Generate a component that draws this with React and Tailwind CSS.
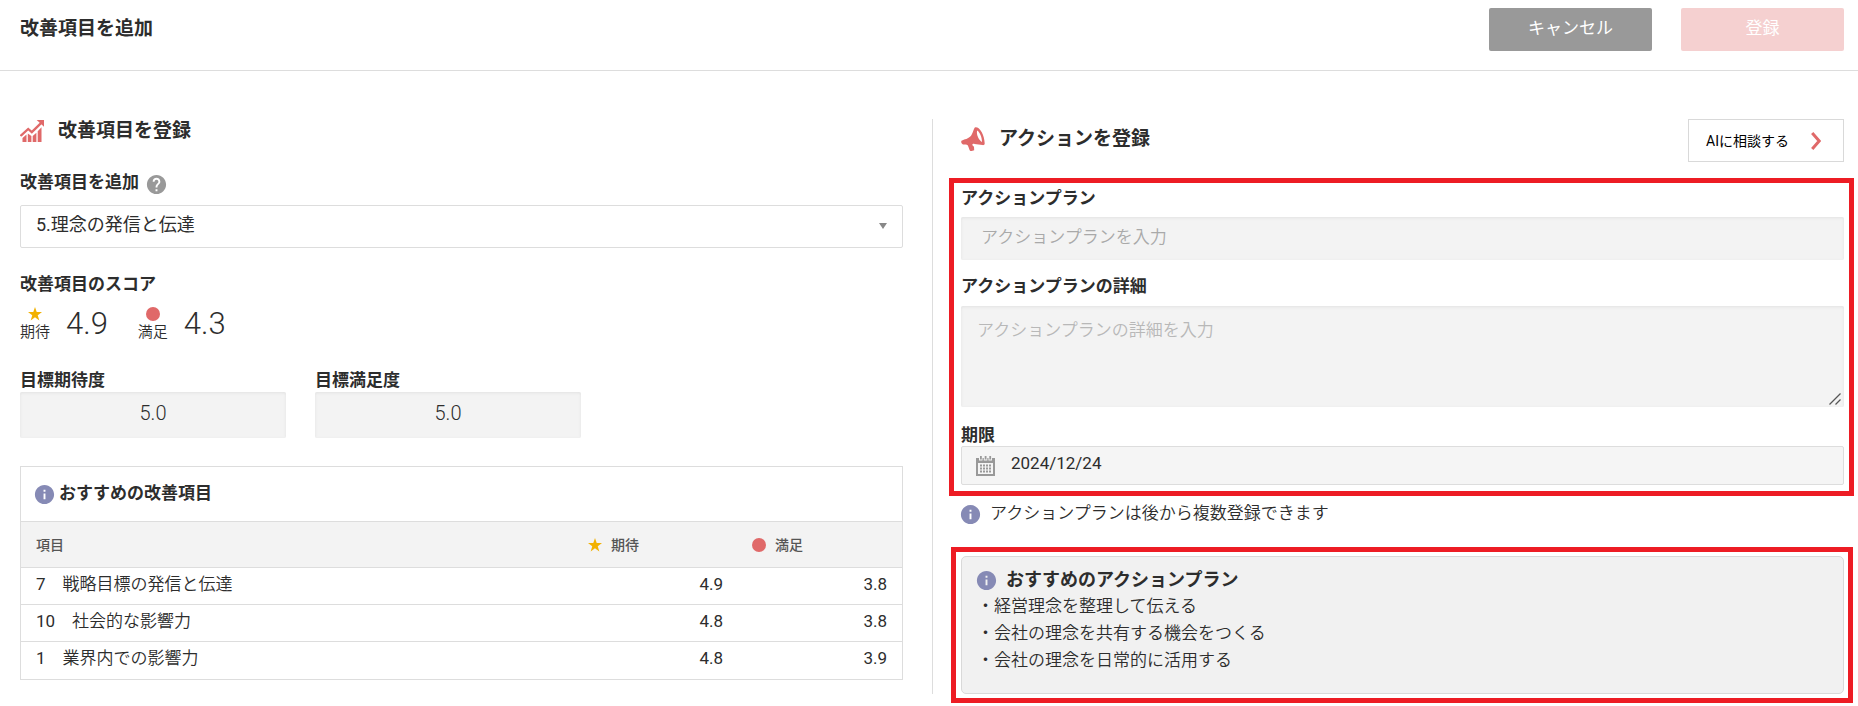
import React, { useState } from 'react';
import { MdHelp, MdInfo } from 'react-icons/md';

const recomendados = [
  { id: 7, nombre: '戦略目標の発信と伝達', expectativa: '4.9', satisfaccion: '3.8' },
  { id: 10, nombre: '社会的な影響力', expectativa: '4.8', satisfaccion: '3.8' },
  { id: 1, nombre: '業界内での影響力', expectativa: '4.8', satisfaccion: '3.9' },
];

const planes = [
  '経営理念を整理して伝える',
  '会社の理念を共有する機会をつくる',
  '会社の理念を日常的に活用する',
];

function Star() {
  return (
    <svg viewBox="0 0 24 24" className="size-[14px] shrink-0 fill-[#f2b100]" aria-hidden="true">
      <path d="M12 0l2.900 8.600H24l-7.300 5.500L19.400 23 12 17.700 4.600 23l2.700-8.900L0 8.600h9.100z" />
    </svg>
  );
}

function Dot() {
  return <span className="inline-block size-[14px] shrink-0 rounded-full bg-[#e06969]" />;
}

function InfoIcon() {
  return <MdInfo className="-m-0.5 size-[23px] shrink-0 text-[#868ab5]" aria-hidden="true" />;
}

function ChartIcon() {
  return (
    <svg viewBox="0 0 24 22" className="h-[22px] w-6 shrink-0" fill="#e06969" aria-hidden="true">
      <path d="M2.500 18l4-3.500V22h-4zM7.800 13.500l3.600 2.500v6H7.800zM12.700 16l3.700-3.200V22h-3.700zM17.700 11.300l3.800-4V22h-3.800z" />
      <path d="M1.200 15.300l7-6.300 3.600 3.100 8.700-8.500" fill="none" stroke="#e06969" strokeWidth="2.300" strokeLinecap="round" />
      <path d="M16.700 0H24v6.800z" />
    </svg>
  );
}

function MegaphoneIcon() {
  return (
    <svg viewBox="0 0 24 24" className="size-6 shrink-0" fill="#e06969" aria-hidden="true">
      <path
        fillRule="evenodd"
        d="M14.500 0.200C19 0 23.500 8 23.700 16.500c0 1.200-1 1.800-2.200 1.600l-8-1.200c-1.800-.3-2.500.5-1.900 1.700l1.400 1.200.2 3.500-3.300.9c-1.500-.2-1.800-3.300-3.200-6-1-.9-2.700-.3-4.200-.7C.6 17-.3 15.400.5 13.800c.5-1 6-1.600 8.500-4.100C12 7.200 12.500.400 14.500.200zM16.200 3.500c-1.200 3.500 1.500 9.500 4.800 11.500C21 10 19 5.500 16.200 3.500z"
      />
    </svg>
  );
}

function CalendarIcon() {
  return (
    <svg viewBox="0 0 19 20" className="h-5 w-[19px] shrink-0" aria-hidden="true">
      <path d="M0 2h19v18H0z" fill="#999" />
      <path d="M2 7h15v11H2z" fill="#f5f5f5" />
      <path d="M3 0h3.500v4.500H3zM7.800 0h3.500v4.500H7.800zM12.500 0H16v4.500h-3.500z" fill="#f5f5f5" />
      <path d="M4 0h1.800v3.500H4zM8.700 0h1.800v3.500H8.700zM13.300 0h1.800v3.500h-1.800z" fill="#999" />
      <path d="M4 9.500h11.500M4 12.500h11.500M4 15.500h11.500" stroke="#999" strokeWidth="2" strokeDasharray="2 1" />
    </svg>
  );
}

function ScoreItem({ icon, label, value }) {
  return (
    <div className="flex items-start gap-4">
      <div className="flex flex-col items-center text-[15px] leading-[22px] font-[350]">
        {icon}
        <span>{label}</span>
      </div>
      <span className="text-[31px] leading-[34px] font-light">{value}</span>
    </div>
  );
}

function TargetField({ id, label }) {
  return (
    <div className="w-[266px]">
      <label htmlFor={id} className="block text-[17px] leading-6 font-bold">{label}</label>
      <input
        id={id}
        defaultValue="5.0"
        className="block h-[46px] w-full rounded-[2px] bg-[#f3f3f3] pb-1 text-center text-xl font-light text-[#2d2d2d] inset-shadow-[0_1px_3px_#e2e2e2]"
      />
    </div>
  );
}

// Cabecera con título y botones
function Header() {
  return (
    <header className="flex h-[71px] items-start justify-between border-b border-[#ddd] pt-2 pr-3.5 pl-5">
      <h1 className="text-[19px] leading-[42px] font-bold">改善項目を追加</h1>
      <div className="flex gap-[29px] text-[17px] text-white">
        <button type="button" className="h-[43px] w-[163px] rounded-[2px] bg-[#999] pb-0.5">キャンセル</button>
        <button type="button" className="h-[43px] w-[163px] rounded-[2px] bg-[#f5d0d0] pb-0.5">登録</button>
      </div>
    </header>
  );
}

// Columna izquierda: elemento a mejorar
function ImprovementPanel() {
  return (
    <section className="flex-1 pr-[29px]">
      <div className="flex h-6 items-center gap-[14px]">
        <ChartIcon />
        <h2 className="text-[19px] leading-[26px] font-bold">改善項目を登録</h2>
      </div>

      <div className="mt-6 flex h-[30px] items-center gap-1.5">
        <label htmlFor="item" className="text-[17px] leading-6 font-bold">改善項目を追加</label>
        <MdHelp className="mt-1 size-[23px] text-[#999]" aria-hidden="true" />
      </div>
      <div className="relative mt-2">
        <select
          id="item"
          className="h-[43px] w-full appearance-none rounded-[2px] border border-[#ddd] bg-white pr-10 pb-1 pl-[15px] text-[18px]"
        >
          <option>5.理念の発信と伝達</option>
        </select>
        <svg viewBox="0 0 8 6" className="pointer-events-none absolute top-[18px] right-4 h-1.5 w-2 fill-[#888]" aria-hidden="true">
          <path d="M0 0h8L4 6z" />
        </svg>
      </div>

      <h3 className="mt-6 text-[17px] leading-6 font-bold">改善項目のスコア</h3>
      <div className="mt-[11px] flex h-[37px] gap-[30px]">
        <ScoreItem icon={<Star />} label="期待" value="4.9" />
        <ScoreItem icon={<Dot />} label="満足" value="4.3" />
      </div>

      <div className="mt-6 flex gap-[29px]">
        <TargetField id="target-expect" label="目標期待度" />
        <TargetField id="target-satisfy" label="目標満足度" />
      </div>

      <div className="mt-7 border border-[#ddd]">
        <div className="flex h-[54px] items-center gap-[5px] px-[14px]">
          <InfoIcon />
          <h3 className="pb-0.5 text-[17px] leading-6 font-bold">おすすめの改善項目</h3>
        </div>
        <table className="w-full table-fixed text-[17px]">
          <thead className="bg-[#f3f3f3] text-left text-sm text-[#555]">
            <tr className="h-[46px] border-t border-[#ddd]">
              <th className="px-[15px] font-medium">項目</th>
              <th className="w-[164px] px-3.5 font-medium">
                <span className="flex items-center gap-[9px]"><Star />期待</span>
              </th>
              <th className="w-[164px] px-3.5 font-medium">
                <span className="flex items-center gap-[9px]"><Dot />満足</span>
              </th>
            </tr>
          </thead>
          <tbody>
            {recomendados.map((item) => (
              <tr key={item.id} className="h-[37px] border-t border-[#ddd] leading-6">
                <td className="px-[15px] pb-1 font-[350]">
                  <span className="font-normal">{item.id}</span>{'\u3000'}{item.nombre}
                </td>
                <td className="px-[15px] pb-1 text-right">{item.expectativa}</td>
                <td className="px-[15px] pb-1 text-right">{item.satisfaccion}</td>
              </tr>
            ))}
          </tbody>
        </table>
      </div>
    </section>
  );
}

// Columna derecha: plan de acción
function ActionPanel() {
  const [fecha, setFecha] = useState('2024/12/24');

  return (
    <section className="flex-1 border-l border-[#ddd] pl-7">
      <div className="flex items-center justify-between">
        <div className="flex items-center gap-[14px] pb-1">
          <MegaphoneIcon />
          <h2 className="text-[19px] leading-[26px] font-bold">アクションを登録</h2>
        </div>
        <button type="button" className="flex h-[43px] w-[156px] items-center justify-between border border-[#d9d9d9] pr-[22px] pl-[17px] text-sm text-black">
          AIに相談する
          <svg viewBox="0 0 10 18" className="h-[18px] w-2.5" fill="none" stroke="#e06969" strokeWidth="3" aria-hidden="true">
            <path d="M1.200 1l7 8-7 8" />
          </svg>
        </button>
      </div>

      <div className="mt-4 -mr-2.5 -ml-3 h-[318px] border-5 border-[#ed1c24] pt-[3px] pr-[5px] pl-[7px]">
        <label htmlFor="plan" className="block text-[17px] leading-6 font-bold">アクションプラン</label>
        <input
          id="plan"
          placeholder="アクションプランを入力"
          className="mt-[7px] block h-[43px] w-full rounded-[2px] bg-[#f3f3f3] px-5 pb-1 text-[17px] font-[350] inset-shadow-[0_1px_3px_#e2e2e2] placeholder:text-[#a9a9a9]"
        />
        <label htmlFor="detail" className="mt-[14px] block text-[17px] leading-6 font-bold">アクションプランの詳細</label>
        <div className="relative mt-2">
          <textarea
            id="detail"
            placeholder="アクションプランの詳細を入力"
            className="block h-[101px] w-full resize-none rounded-[2px] bg-[#f3f3f3] px-4 py-3 text-[17px] leading-6 font-[350] inset-shadow-[0_1px_3px_#e2e2e2] placeholder:text-[#b8b8b8]"
          />
          <svg viewBox="0 0 12 12" className="pointer-events-none absolute right-[3px] bottom-0.5 size-3" stroke="#555" strokeWidth="1.300" aria-hidden="true">
            <path d="M0.500 11.500l11-11M6.500 11.500l5-5" />
          </svg>
        </div>
        <label htmlFor="due" className="mt-4 block text-[17px] leading-6 font-bold">期限</label>
        <div className="-mt-px flex h-[39px] items-center gap-4 rounded-[2px] border border-[#ddd] bg-[#f5f5f5] pl-[14px]">
          <CalendarIcon />
          <input
            id="due"
            value={fecha}
            onChange={(e) => setFecha(e.target.value)}
            className="w-full bg-transparent pb-1 text-[17px] text-[#2d2d2d]"
          />
        </div>
      </div>

      <p className="mt-1.5 flex h-6 items-center gap-2.5 text-[17px] font-[350]">
        <InfoIcon />
        アクションプランは後から複数登録できます
      </p>

      <div className="mt-[21px] -mr-[9px] -mb-[9px] -ml-2.5 border-5 border-[#ed1c24] pt-1 pr-1 pb-1 pl-[5px]">
        <div className="h-[138px] rounded-[5px] border border-[#d9d9d9] bg-[#f1f1f1] px-[15px] pt-[10px]">
          <div className="flex items-center gap-2.5">
            <InfoIcon />
            <h3 className="text-[18px] leading-[26px] font-bold">おすすめのアクションプラン</h3>
          </div>
          <ul className="text-[17px] leading-[27px] font-[350]">
            {planes.map((plan) => (
              <li key={plan}>・{plan}</li>
            ))}
          </ul>
        </div>
      </div>
    </section>
  );
}

export default function App() {
  return (
    <div className="bg-white font-[Roboto,'Noto_Sans_CJK_JP',sans-serif] text-[#2d2d2d]" lang="ja">
      <Header />
      <main className="flex pt-12 pr-3.5 pb-3 pl-5">
        <ImprovementPanel />
        <ActionPanel />
      </main>
    </div>
  );
}
